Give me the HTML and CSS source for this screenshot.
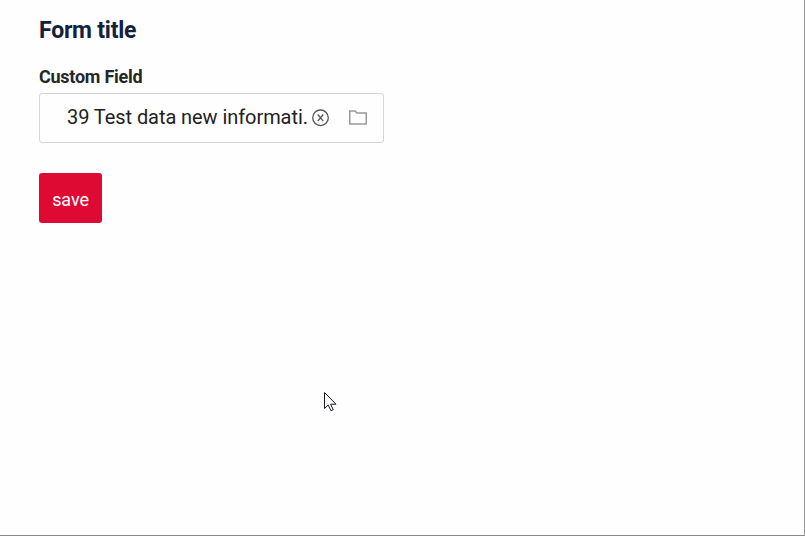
FILE: index.html
```html
<!DOCTYPE html>
<html lang="en">
<head>
<meta charset="utf-8">
<title>Form title</title>
<link rel="stylesheet" href="styles.css">
</head>
<body>
<form class="form">
  <h1 class="title">Form title</h1>
  <div class="label">Custom Field</div>
  <div class="field">
    <span class="value">39 Test data new informati.</span>
    <svg class="clear" width="18" height="18" viewBox="0 0 18 18"><circle cx="9.5" cy="8.8" r="7.8"/><path d="M6.7 5.5 12.3 12.1M12.3 5.5 6.7 12.1"/></svg>
    <svg class="folder" width="20" height="18" viewBox="0 0 20 18"><path d="M1.75 2H7L9 4H18.25V15H1.75Z"/></svg>
  </div>
  <button class="save" type="button">save</button>
</form>
<svg class="cursor" width="13" height="20" viewBox="0 0 13 20"><path d="M.5 .5V16.5L4.2 13 7 18.8 9.3 17.7 6.6 12.2H12Z"/></svg>
</body>
</html>
```
FILE: styles.css
```css
* {
  box-sizing: border-box;
}

body {
  margin: 0;
  height: 536px;
  overflow: hidden;
  background: #fefefe;
  border-right: 1px solid #999;
  border-bottom: 1px solid #888;
  font-family: Roboto, "Liberation Sans", sans-serif;
  color: #222;
}

.form {
  padding: 16px 0 0 39px;
}

.title {
  margin: 0;
  font-size: 23px;
  line-height: 30px;
  font-weight: 700;
  letter-spacing: -0.23px;
  color: #14213d;
}

.label {
  margin-top: 19px;
  font-size: 18px;
  line-height: 24px;
  font-weight: 700;
  letter-spacing: -0.25px;
  color: #262626;
}

.field {
  display: flex;
  align-items: center;
  width: 345px;
  height: 50px;
  margin-top: 4px;
  padding-left: 27px;
  border: 1px solid #d5d5d5;
  border-radius: 3px;
}

.value {
  width: 241px;
  padding-bottom: 2px;
  font-size: 20px;
  line-height: 28px;
  letter-spacing: -0.07px;
  white-space: nowrap;
}

.clear,
.folder {
  flex: none;
  fill: none;
}

.clear {
  margin-left: 3px;
  stroke: #555;
  stroke-width: 1.3;
}

.folder {
  margin-left: 19px;
  stroke: #999;
  stroke-width: 1.5;
}

.save {
  display: block;
  width: 63px;
  height: 50px;
  margin-top: 30px;
  padding: 3px 0 0;
  border: 0;
  border-radius: 3px;
  background: #df0a34;
  color: #fff;
  font: 400 18px Roboto, "Liberation Sans", sans-serif;
  letter-spacing: -0.1px;
}

.cursor {
  position: absolute;
  left: 324px;
  top: 392px;
  fill: #fff;
  stroke: #161623;
  stroke-width: 1;
}
```
